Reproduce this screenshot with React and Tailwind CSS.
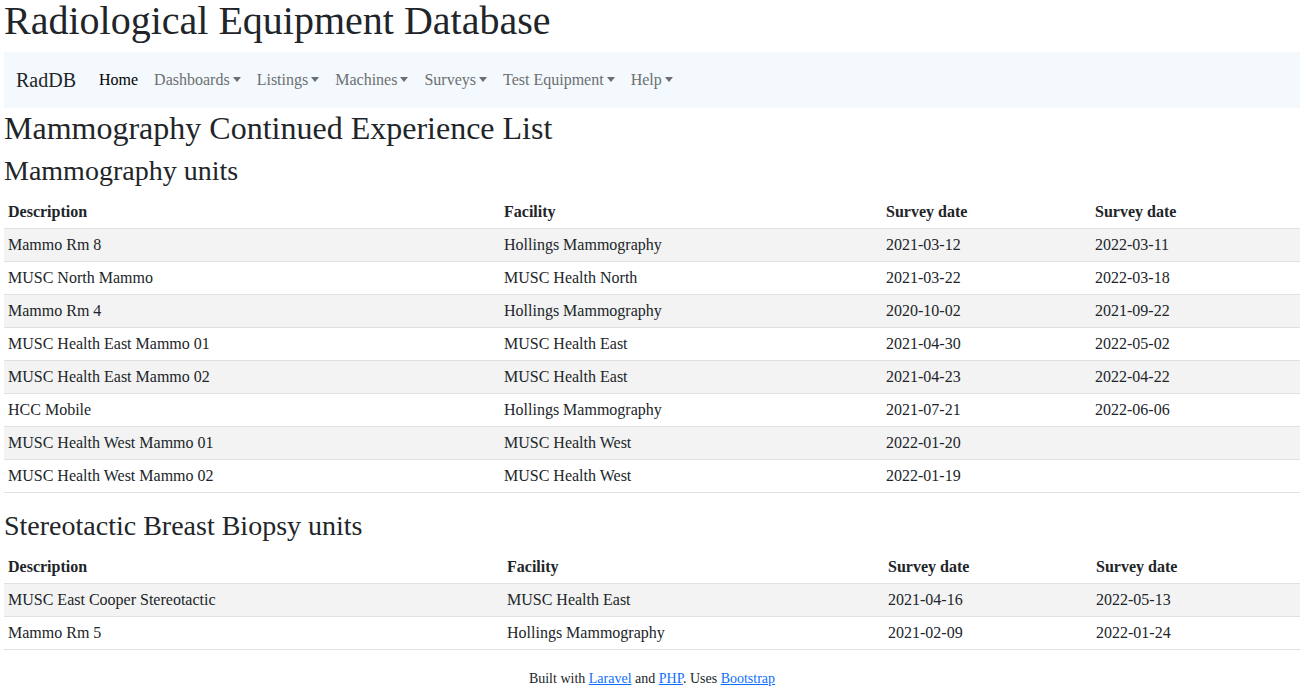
const mammoUnits = [
  ['Mammo Rm 8', 'Hollings Mammography', '2021-03-12', '2022-03-11'],
  ['MUSC North Mammo', 'MUSC Health North', '2021-03-22', '2022-03-18'],
  ['Mammo Rm 4', 'Hollings Mammography', '2020-10-02', '2021-09-22'],
  ['MUSC Health East Mammo 01', 'MUSC Health East', '2021-04-30', '2022-05-02'],
  ['MUSC Health East Mammo 02', 'MUSC Health East', '2021-04-23', '2022-04-22'],
  ['HCC Mobile', 'Hollings Mammography', '2021-07-21', '2022-06-06'],
  ['MUSC Health West Mammo 01', 'MUSC Health West', '2022-01-20', ''],
  ['MUSC Health West Mammo 02', 'MUSC Health West', '2022-01-19', ''],
];

const sbbUnits = [
  ['MUSC East Cooper Stereotactic', 'MUSC Health East', '2021-04-16', '2022-05-13'],
  ['Mammo Rm 5', 'Hollings Mammography', '2021-02-09', '2022-01-24'],
];

const menus = ['Dashboards', 'Listings', 'Machines', 'Surveys', 'Test Equipment', 'Help'];

const Caret = () => (
  <span className="ml-[3px] inline-block align-middle border-x-[4px] border-t-[5px] border-x-transparent border-t-current mb-[3px]" />
);

const UnitTable = ({ rows, widths }) => (
  <table className="w-full border-collapse table-fixed mb-4">
    <colgroup>
      {widths.map((w, i) => (
        <col key={i} className={w} />
      ))}
    </colgroup>
    <thead>
      <tr className="border-b border-[#dee2e6]">
        <th className="text-left font-bold px-1 py-1 leading-6">Description</th>
        <th className="text-left font-bold px-1 py-1 leading-6">Facility</th>
        <th className="text-left font-bold px-1 py-1 leading-6">Survey date</th>
        <th className="text-left font-bold px-1 py-1 leading-6">Survey date</th>
      </tr>
    </thead>
    <tbody>
      {rows.map((r, i) => (
        <tr key={i} className={`border-b border-[#dee2e6] ${i % 2 === 0 ? 'bg-[#f2f3f2]' : 'bg-white'}`}>
          {r.map((c, j) => (
            <td key={j} className="px-1 py-1 leading-6">{c}</td>
          ))}
        </tr>
      ))}
    </tbody>
  </table>
);

const App = () => {
  return (
    <div className="min-h-screen bg-white text-[#212529] text-base pl-1 pr-[14px]" style={{ fontFamily: '"Liberation Serif", "Times New Roman", serif' }}>
      <h1 className="text-[40px] leading-[42px] font-normal mb-[10px]">Radiological Equipment Database</h1>

      <nav className="bg-[#f3f9fc] h-[56px] flex items-center px-3">
        <span className="text-[20px] mr-[15px] leading-[30px]">RadDB</span>
        <div className="flex items-center">
          <span className="px-2 text-black leading-6">Home</span>
          {menus.map((m) => (
            <span key={m} className="px-2 text-[#6c6f72] leading-6">
              {m}
              <Caret />
            </span>
          ))}
        </div>
      </nav>

      <h2 className="text-[32px] leading-[38px] font-normal mt-[1px] mb-[7px]">Mammography Continued Experience List</h2>
      <h3 className="text-[28px] leading-[34px] font-normal mb-2">Mammography units</h3>
      <UnitTable rows={mammoUnits} widths={['w-[496px]', 'w-[382px]', 'w-[209px]', 'w-[209px]']} />

      <h3 className="text-[28px] leading-[34px] font-normal mb-2">Stereotactic Breast Biopsy units</h3>
      <UnitTable rows={sbbUnits} widths={['w-[499px]', 'w-[381px]', 'w-[208px]', 'w-[208px]']} />

      <footer className="text-center text-sm pt-[3px] pb-2 leading-5">
        Built with <a href="#" className="text-[#0d6efd] underline">Laravel</a> and{' '}
        <a href="#" className="text-[#0d6efd] underline">PHP</a>. Uses{' '}
        <a href="#" className="text-[#0d6efd] underline">Bootstrap</a>
      </footer>
    </div>
  );
};

export default App;
